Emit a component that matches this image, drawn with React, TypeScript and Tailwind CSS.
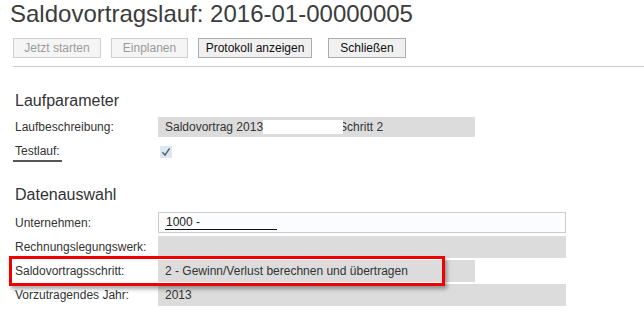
import React from 'react';

function Btn({ label, width, disabled }: { label: string; width: string; disabled?: boolean }) {
  return (
    <button
      className={`${width} h-[20px] flex items-center justify-center text-[12px] leading-none border ${
        disabled
          ? 'border-[#cfcfcf] bg-[#f5f5f5] text-[#9a9a9a]'
          : 'border-[#adadad] bg-[#f0f0f0] text-[#111]'
      }`}
    >
      {label}
    </button>
  );
}

function Label({ children }: { children: React.ReactNode }) {
  return <div className="w-[143px] shrink-0 text-[12px] text-[#333]">{children}</div>;
}

export default function App() {
  return (
    <div className="relative w-[644px] h-[326px] overflow-hidden bg-white font-['Liberation_Sans',Arial,sans-serif] text-[#333]">
      <h1 className="pl-[10px] text-[24px] leading-[28px] text-[#3c3c3c]">
        Saldovortragslauf: 2016-01-00000005
      </h1>

      {/* toolbar */}
      <div className="mt-[10px] flex pl-[13px]">
        <Btn label="Jetzt starten" width="w-[88px]" disabled />
        <div className="w-[10px]" />
        <Btn label="Einplanen" width="w-[77px]" disabled />
        <div className="w-[10px]" />
        <Btn label="Protokoll anzeigen" width="w-[114px]" />
        <div className="w-[16px]" />
        <Btn label="Schließen" width="w-[78px]" />
      </div>
      <div className="mt-[8px] ml-[13px] h-px bg-[#cccccc]" />

      {/* Laufparameter */}
      <div className="pl-[15px]">
        <h2 className="mt-[24px] text-[16px] leading-[20px] text-[#333]">Laufparameter</h2>

        <div className="mt-[6px] flex items-center h-[20px]">
          <Label>Laufbeschreibung:</Label>
          <div className="relative w-[317px] h-[20px] bg-[#dcdcdc] flex items-center pl-[7px] text-[12px] whitespace-nowrap">
            Saldovortrag 2013
            <span className="inline-block w-[76px]" />
            Schritt 2
            <div className="absolute left-[105px] top-[3px] w-[80px] h-[14px] bg-white" />
          </div>
        </div>

        <div className="mt-[7px] flex items-start h-[21px]">
          <div className="w-[143px] shrink-0 relative h-[21px]">
            <span className="block text-[12px] leading-[15px] text-[#333]">Testlauf:</span>
            <div className="absolute left-[-2px] top-[16px] w-[49px] h-[2px] bg-[#555]" />
          </div>
          <div className="ml-[2px] mt-[2px] w-[12px] h-[12px] bg-[#dbe7f4] flex items-center justify-center">
            <svg width="10" height="10" viewBox="0 0 10 10">
              <path d="M1.5 5.2 L4 8.2 L8.6 1.4" fill="none" stroke="#5a5a5a" strokeWidth="1.4" />
            </svg>
          </div>
        </div>

        {/* Datenauswahl */}
        <h2 className="mt-[20px] text-[16px] leading-[20px] text-[#333]">Datenauswahl</h2>

        <div className="mt-[7px] flex items-center h-[21px]">
          <Label>Unternehmen:</Label>
          <div className="w-[408px] h-[21px] border border-[#cccccc] bg-[#fbfcfd] flex items-center pl-[6px]">
            <span className="inline-block w-[112px] border-b border-[#111] text-[12px] leading-[13px] text-[#222] pl-[1px]">
              1000 -
            </span>
          </div>
        </div>

        <div className="mt-[3px] flex items-center h-[22px]">
          <Label>Rechnungslegungswerk:</Label>
          <div className="w-[408px] h-[22px] bg-[#dcdcdc]" />
        </div>

        <div className="mt-[2px] flex items-center h-[22px]">
          <Label>Saldovortragsschritt:</Label>
          <div className="w-[317px] h-[22px] bg-[#dcdcdc] flex items-center pl-[7px] text-[12px] whitespace-nowrap">
            2 - Gewinn/Verlust berechnen und übertragen
          </div>
        </div>

        <div className="mt-[2px] flex items-center h-[22px]">
          <Label>Vorzutragendes Jahr:</Label>
          <div className="w-[408px] h-[22px] bg-[#dcdcdc] flex items-center pl-[7px] text-[12px]">
            2013
          </div>
        </div>
      </div>

      {/* red highlight annotation */}
      <div className="absolute left-[9px] top-[256px] w-[436px] h-[30px] border-[3px] border-[#ee0000] shadow-[2px_3px_4px_rgba(0,0,0,0.35)]" />
    </div>
  );
}
